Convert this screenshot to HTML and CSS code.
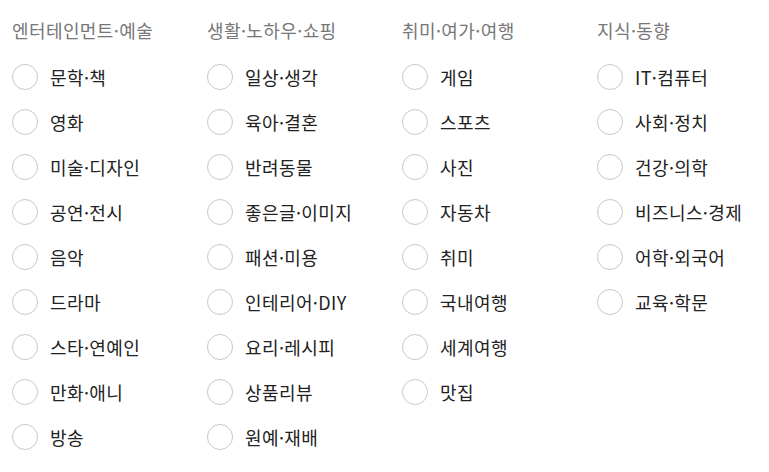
FILE: index.html
```html
<!DOCTYPE html>
<html lang="ko">
<head>
    <meta charset="UTF-8">
    <title>관심 분야</title>
    <link rel="stylesheet" href="styles.css">
</head>
<body>
<div id="topics">
    <div class="col">
        <h3 class="colTitle">엔터테인먼트·예술</h3>
        <ul>
            <li><label><input type="radio" name="topic"><span>문학·책</span></label></li>
            <li><label><input type="radio" name="topic"><span>영화</span></label></li>
            <li><label><input type="radio" name="topic"><span>미술·디자인</span></label></li>
            <li><label><input type="radio" name="topic"><span>공연·전시</span></label></li>
            <li><label><input type="radio" name="topic"><span>음악</span></label></li>
            <li><label><input type="radio" name="topic"><span>드라마</span></label></li>
            <li><label><input type="radio" name="topic"><span>스타·연예인</span></label></li>
            <li><label><input type="radio" name="topic"><span>만화·애니</span></label></li>
            <li><label><input type="radio" name="topic"><span>방송</span></label></li>
        </ul>
    </div>
    <div class="col">
        <h3 class="colTitle">생활·노하우·쇼핑</h3>
        <ul>
            <li><label><input type="radio" name="topic"><span>일상·생각</span></label></li>
            <li><label><input type="radio" name="topic"><span>육아·결혼</span></label></li>
            <li><label><input type="radio" name="topic"><span>반려동물</span></label></li>
            <li><label><input type="radio" name="topic"><span>좋은글·이미지</span></label></li>
            <li><label><input type="radio" name="topic"><span>패션·미용</span></label></li>
            <li><label><input type="radio" name="topic"><span>인테리어·DIY</span></label></li>
            <li><label><input type="radio" name="topic"><span>요리·레시피</span></label></li>
            <li><label><input type="radio" name="topic"><span>상품리뷰</span></label></li>
            <li><label><input type="radio" name="topic"><span>원예·재배</span></label></li>
        </ul>
    </div>
    <div class="col">
        <h3 class="colTitle">취미·여가·여행</h3>
        <ul>
            <li><label><input type="radio" name="topic"><span>게임</span></label></li>
            <li><label><input type="radio" name="topic"><span>스포츠</span></label></li>
            <li><label><input type="radio" name="topic"><span>사진</span></label></li>
            <li><label><input type="radio" name="topic"><span>자동차</span></label></li>
            <li><label><input type="radio" name="topic"><span>취미</span></label></li>
            <li><label><input type="radio" name="topic"><span>국내여행</span></label></li>
            <li><label><input type="radio" name="topic"><span>세계여행</span></label></li>
            <li><label><input type="radio" name="topic"><span>맛집</span></label></li>
        </ul>
    </div>
    <div class="col">
        <h3 class="colTitle">지식·동향</h3>
        <ul>
            <li><label><input type="radio" name="topic"><span>IT·컴퓨터</span></label></li>
            <li><label><input type="radio" name="topic"><span>사회·정치</span></label></li>
            <li><label><input type="radio" name="topic"><span>건강·의학</span></label></li>
            <li><label><input type="radio" name="topic"><span>비즈니스·경제</span></label></li>
            <li><label><input type="radio" name="topic"><span>어학·외국어</span></label></li>
            <li><label><input type="radio" name="topic"><span>교육·학문</span></label></li>
        </ul>
    </div>
</div>
</body>
</html>
```

FILE: styles.css
```css
*{ padding: 0; margin: 0; box-sizing: border-box}
li{ list-style: none}
body{ font-family: "Noto Sans CJK KR", "Noto Sans", sans-serif; color: #222; background: #fff}
#topics{ display: flex; padding: 18px 0 0 12px}
.col{ width: 195px; flex-shrink: 0}
.colTitle{ font-size: 18px; font-weight: normal; color: #777; line-height: 24px; margin-bottom: 12px; letter-spacing: 0.4px}
.col li{ height: 45px; display: flex; align-items: center}
.col label{ display: flex; align-items: center; cursor: pointer; font-size: 18px; line-height: 24px; color: #222; letter-spacing: 0.4px}
.col input{ appearance: none; -webkit-appearance: none; width: 26px; height: 26px;
    border: 1px solid #c8c8c8; border-radius: 50%; background: #fff; margin-right: 12px; cursor: pointer}
.col input:checked{ border: 7px solid #03c75a}
```
